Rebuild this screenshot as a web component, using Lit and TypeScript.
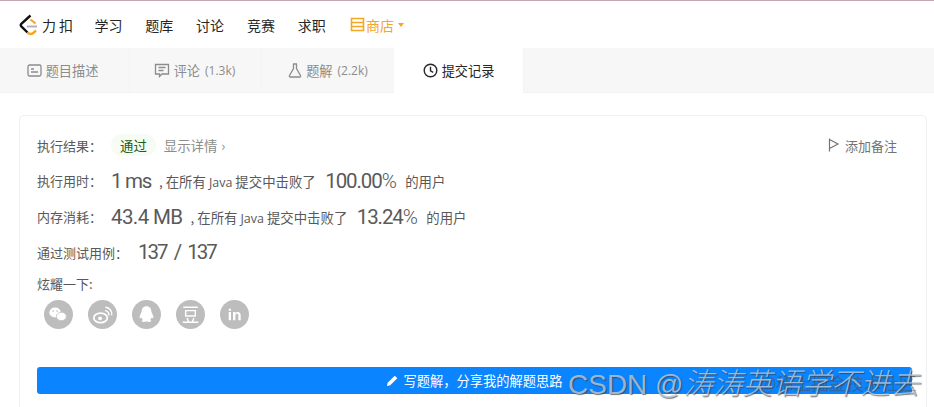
import { LitElement, html, css, svg } from "lit";
import { customElement } from "lit/decorators.js";

const shareIcons = [
  svg`<ellipse cx="11.500" cy="13" rx="6" ry="5.200" fill="#fff"/><ellipse cx="18" cy="17" rx="5.200" ry="4.400" fill="#fff" stroke="#bdbdbd" stroke-width="0.800"/><circle cx="9.500" cy="11.500" r=".8" fill="#bdbdbd"/><circle cx="13.500" cy="11.500" r=".8" fill="#bdbdbd"/>`,
  svg`<ellipse cx="13" cy="18.500" rx="7" ry="5" fill="none" stroke="#fff" stroke-width="1.800"/><circle cx="12.500" cy="19" r="2" fill="#fff"/><path d="M17.500 11a4 4 0 0 1 4 5M18 7.500a7 7 0 0 1 6.500 8.500" fill="none" stroke="#fff" stroke-width="1.500"/>`,
  svg`<path d="M15 6.500c-3.400 0-5 2.600-5 5.400 0 1.200-2.200 3.800-2.200 6 0 1.200.8 1.200 1.800.2.400 1.200 1 2 1.800 2.600-1.200.4-1.800 1-1 1.600 1 .6 3.400.4 4.600-.3 1.200.7 3.600.9 4.600.3.800-.6.2-1.200-1-1.600.8-.6 1.400-1.400 1.800-2.600 1 1 1.800 1 1.800-.2 0-2.200-2.200-4.800-2.200-6C20 9.100 18.400 6.500 15 6.500z" fill="#fff"/>`,
  svg`<path d="M7.500 7.500h15M10 11h10v5.500H10zM11.500 18.500l1.500 4M18.500 18.500l-1.500 4M7 23h16" fill="none" stroke="#fff" stroke-width="1.500"/>`,
  svg`<path d="M9 12.500h2.400V21H9zM9 9h2.400v2.200H9zM13.500 12.500h2.300v1.200c.6-1 1.600-1.400 2.600-1.400 2 0 3 1.300 3 3.400V21h-2.400v-5.200c0-1-.4-1.600-1.300-1.600-1 0-1.800.7-1.800 1.900V21h-2.400z" fill="#fff"/>`,
];

@customElement("app-root")
export class AppRoot extends LitElement {
  static styles = css`
    :host {
      display: block;
      width: 934px;
      height: 407px;
      overflow: hidden;
      position: relative;
      background: #fff;
      font-family: "Noto Sans CJK SC", "Noto Sans", sans-serif;
      color: #595959;
    }
    .nav {
      height: 47px;
      border-top: 1px solid #c9a5ad;
      display: flex;
      align-items: center;
      padding-left: 19px;
      background: #fff;
    }
    .logo { display: flex; align-items: center; width: 75.500px; }
    .logo-text { font-size: 14px; color: #262626; margin-left: 4px; letter-spacing: 3px; line-height: 1; }
    .links { display: flex; gap: 22.800px; font-size: 14px; color: #262626; }
    .store { display: flex; align-items: center; color: #f5a623; margin-left: 1.500px; gap: 1px; }
    .store svg { flex: none; }
    .caret { width: 0; height: 0; border: 3.500px solid transparent; border-top: 4px solid #f5a623; border-bottom: 0; margin-left: 3px; }
    .tabs {
      height: 45px;
      background: #f7f7f7;
      display: flex;
      border-bottom: 1px solid #f2f2f2;
      box-sizing: border-box;
      font-size: 13.200px;
      color: #8c8c8c;
    }
    .tab { display: flex; align-items: center; justify-content: center; gap: 4px; border-right: 1px solid #f3f3f3; box-sizing: border-box; }
    .tab.t1 { width: 130px; padding-right: 4px; }
    .tab.t2 { width: 132px; padding-right: 2px; }
    .tab.t3 { width: 132px; border-right: 0; }
    .tab.active { width: 130px; background: #fff; color: #262626; height: 45px; }
    .tab .latin { font-family: "Open Sans", sans-serif; font-size: 12px; margin-left: 1px; }
    .card {
      margin: 22px 7px 0 19px;
      height: 320px;
      border: 1px solid #f0f0f0;
      border-radius: 5px;
      box-sizing: border-box;
      padding: 18px 29px 0 17px;
      font-size: 13px;
    }
    .row { display: flex; align-items: center; height: 22px; margin-bottom: 13.800px; }
    .label { width: 74px; flex: none; color: #595959; }
    .label.first { width: 75px; }
    .label.wide { width: 101px; }
    .badge { background: #f6fcf4; color: #1b5e20; border-radius: 11px; padding: 0 9px; height: 22px; line-height: 22px; margin-left: -1px; font-size: 13.400px; }
    .details { color: #8c8c8c; margin-left: 8px; font-size: 13.400px; word-spacing: 1px; }
    .note { margin-left: auto; display: flex; align-items: center; gap: 5px; color: #737373; font-size: 13px; }
    .big { font-family: Roboto, sans-serif; font-size: 20.500px; color: #595959; white-space: pre; letter-spacing: -0.600px; }
    .big.ms { letter-spacing: -1.300px; }
    .big.tight { letter-spacing: -1.100px; }
    .big.ratio { letter-spacing: -2px; word-spacing: 4px; }
    .pct-sign { font-weight: 300; }
    .small { font-size: 13.400px; color: #595959; margin-left: 8px; white-space: pre; }
    .small .j { font-family: "Open Sans", sans-serif; font-size: 12.500px; }
    .pct { margin-left: 9.500px; }
    .share-label { font-size: 13px; height: 18px; line-height: 18px; margin-top: -2px; }
    .share { display: flex; gap: 15px; margin: 7px 0 0 7px; }
    .circle { width: 29px; height: 29px; border-radius: 50%; background: #bdbdbd; display: block; }
    .btn {
      position: absolute;
      left: 37px;
      top: 367px;
      width: 875px;
      height: 27px;
      background: #0a84ff;
      border-radius: 3px;
      color: #fff;
      font-size: 13.250px;
      display: flex;
      align-items: center;
      justify-content: center;
      gap: 4px;
    }
    .mark {
      position: absolute;
      left: 568px;
      top: 362px;
      font-family: "Liberation Sans", sans-serif;
      font-size: 28px;
      white-space: nowrap;
      line-height: 38px;
      color: rgba(190, 205, 225, 0.800);
      text-shadow: 1px 1px 1px rgba(60, 60, 60, 0.700);
    }
    .mark .cjk { font-family: "Noto Sans CJK SC", sans-serif; font-weight: 300; font-size: 29.500px; font-style: italic; }
    .mark2 {
      position: absolute;
      left: 760px;
      top: 372px;
      font-size: 17.500px;
      line-height: 22px;
      white-space: nowrap;
      color: rgba(80, 80, 80, 0.550);
    }
  `;

  render() {
    return html`
      <div class="nav">
        <div class="logo">
          <svg width="19" height="22" viewBox="0 0 19 22">
            <path d="M11.500 1.500 2.300 9.800a1.800 1.800 0 0 0 0 2.600L8.500 18.500" fill="none" stroke="#111" stroke-width="2.400"/>
            <path d="M8.500 18.500a4.500 4.500 0 0 0 6 .3l2.500-2.300" fill="none" stroke="#f5a623" stroke-width="2.400"/>
            <path d="M11.500 5.500 16.500 9.500" fill="none" stroke="#f5a623" stroke-width="2.200"/>
            <path d="M8 12.500h10" stroke="#b3b3b3" stroke-width="2"/>
          </svg>
          <span class="logo-text">力扣</span>
        </div>
        <div class="links">
          <span>学习</span><span>题库</span><span>讨论</span><span>竞赛</span><span>求职</span>
          <span class="store">
            <svg width="15" height="15" viewBox="0 0 15 15" fill="none" stroke="#f5a623" stroke-width="1.600">
              <path d="M1.500 1.500h12v4h-12zM1.500 5.500v8h12v-8M1.500 9.500h12"/>
            </svg>
            商店<i class="caret"></i>
          </span>
        </div>
      </div>
      <div class="tabs">
        <div class="tab t1">
          <svg width="15" height="13" viewBox="0 0 15 13" fill="none" stroke="#8c8c8c" stroke-width="1.300">
            <rect x="1" y="1" width="13" height="11" rx="1.500"/><path d="M4 5h3M4 8h7"/>
          </svg>
          题目描述
        </div>
        <div class="tab t2">
          <svg width="16" height="15" viewBox="0 0 16 15" fill="none" stroke="#8c8c8c" stroke-width="1.300">
            <path d="M1.500 1.500h13v9.500H8l-2.500 2.500V11h-4z"/><path d="M4.500 4.500h7M4.500 7.500h5"/>
          </svg>
          评论<span class="latin">(1.3k)</span>
        </div>
        <div class="tab t3">
          <svg width="14" height="15" viewBox="0 0 14 15" fill="none" stroke="#8c8c8c" stroke-width="1.300">
            <path d="M5 1h4M5.500 1v4.500L1.500 12.500a1 1 0 0 0 1 1.500h9a1 1 0 0 0 1-1.500L8.500 5.500V1"/>
          </svg>
          题解<span class="latin">(2.2k)</span>
        </div>
        <div class="tab active">
          <svg width="15" height="15" viewBox="0 0 15 15" fill="none" stroke="#262626" stroke-width="1.400">
            <circle cx="7.500" cy="7.500" r="6.300"/><path d="M7.500 3.800v4l2.700 1.500"/>
          </svg>
          提交记录
        </div>
      </div>
      <div class="card">
        <div class="row">
          <span class="label first">执行结果：</span>
          <span class="badge">通过</span>
          <span class="details">显示详情 ›</span>
          <span class="note">
            <svg width="12" height="14" viewBox="0 0 12 14" fill="none" stroke="#737373" stroke-width="1.200">
              <path d="M1.500 0.500v13M1.500 1.500l8.500 4.500-8.500 4.500"/>
            </svg>
            添加备注
          </span>
        </div>
        <div class="row">
          <span class="label">执行用时：</span>
          <span class="big ms">1 ms</span>
          <span class="small">, 在所有 <span class="j">Java</span> 提交中击败了</span>
          <span class="big tight pct">100.00<span class="pct-sign">%</span></span>
          <span class="small pct">的用户</span>
        </div>
        <div class="row">
          <span class="label">内存消耗：</span>
          <span class="big">43.4 MB</span>
          <span class="small">, 在所有 <span class="j">Java</span> 提交中击败了</span>
          <span class="big tight pct">13.24<span class="pct-sign">%</span></span>
          <span class="small pct">的用户</span>
        </div>
        <div class="row">
          <span class="label wide">通过测试用例：</span>
          <span class="big ratio">137 / 137</span>
        </div>
        <div class="share-label">炫耀一下:</div>
        <div class="share">
          ${shareIcons.map((i) => html`<svg class="circle" viewBox="0 0 30 30">${i}</svg>`)}
        </div>
      </div>
      <div class="btn">
        <svg width="13" height="13" viewBox="0 0 13 13"><path d="M1 12l.7-3.200L8.800 1.700l2.500 2.500-7.100 7.100z" fill="#fff"/></svg>
        写题解，分享我的解题思路
      </div>
      <div class="mark2">@稀土掘金技术社区</div>
      <div class="mark">CSDN @<span class="cjk">涛涛英语学不进去</span></div>
    `;
  }
}
